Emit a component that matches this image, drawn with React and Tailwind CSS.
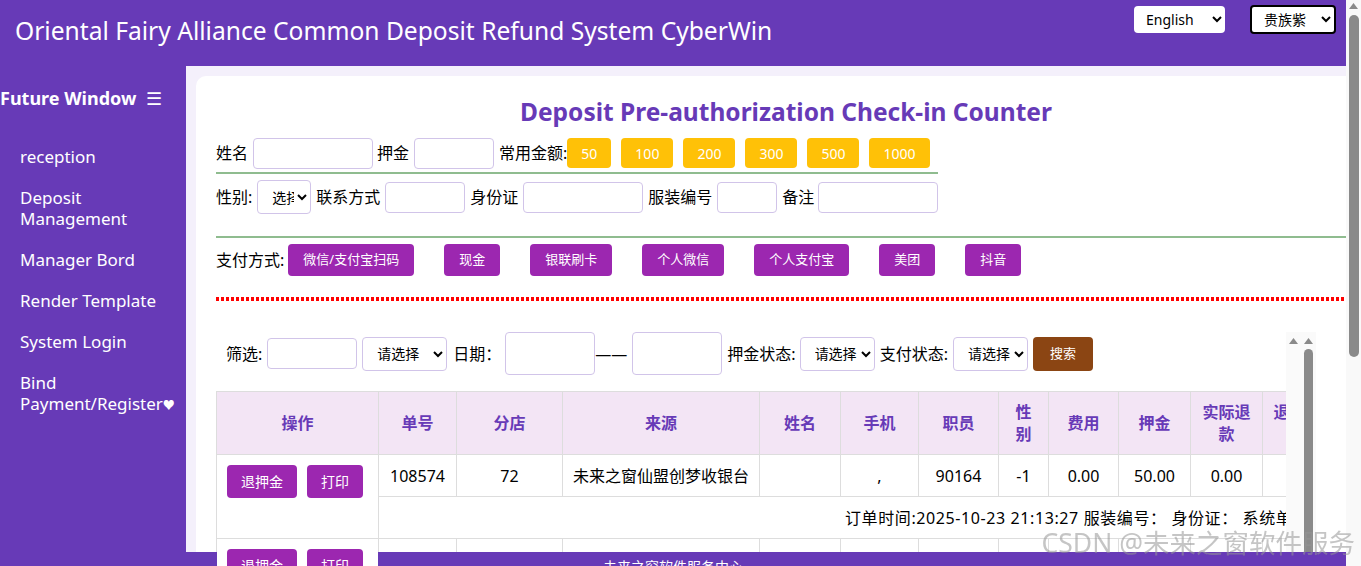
import React from 'react';

const menu = ['reception', 'Deposit Management', 'Manager Bord', 'Render Template', 'System Login'];
const amounts = ['50', '100', '200', '300', '500', '1000'];
const payMethods = ['微信/支付宝扫码', '现金', '银联刷卡', '个人微信', '个人支付宝', '美团', '抖音'];

const columns = [
    { label: '操作', w: 'w-[162px]' },
    { label: '单号', w: 'w-[78px]' },
    { label: '分店', w: 'w-[106px]' },
    { label: '来源', w: 'w-[197px]' },
    { label: '姓名', w: 'w-[81px]' },
    { label: '手机', w: 'w-[78px]' },
    { label: '职员', w: 'w-[80px]' },
    { label: '性别', w: 'w-[50px]' },
    { label: '费用', w: 'w-[70px]' },
    { label: '押金', w: 'w-[72px]' },
    { label: '实际退款', w: 'w-[72px]' },
    { label: '退款时间', w: 'w-[70px]' },
    { label: '押金状态', w: 'w-[90px]' },
    { label: '支付方式', w: 'w-[100px]' },
    { label: '支付状态', w: 'w-[90px]' },
];

const orders = [
    { id: '108574', shop: '72', src: '未来之窗仙盟创梦收银台', staff: '90164', time: '2025-10-23 21:13:27', deposit: '50.00' },
    { id: '108573', shop: '72', src: '未来之窗仙盟创梦收银台', staff: '90164', time: '2025-10-23 20:58:02', deposit: '100.00' },
    { id: '108572', shop: '72', src: '未来之窗仙盟创梦收银台', staff: '90164', time: '2025-10-23 20:41:15', deposit: '50.00' },
];

const inputCls = 'h-[31px] border border-[#d1c4e9] rounded-[4px] bg-white';
const selectCls = 'border border-[#d1c4e9] rounded-[4px] bg-white text-[14px] pl-[10px]';

// scrollbar arrow, drawn as a small triangle
const Arrow = () => (
    <svg width="9" height="6" viewBox="0 0 9 6" className="block">
        <path d="M4.5 0 L9 6 L0 6 Z" fill="#8a8a8a" />
    </svg>
);

export default function App() {
    return (
        <div className="min-h-screen pr-[15px] bg-[#f4f0fb] text-black font-['Noto_Sans','Noto_Sans_CJK_SC',sans-serif]">
            {/* Header */}
            <header className="h-[66px] bg-[#673ab7] flex items-start justify-between pl-[15px] pr-[10px]">
                <h1 className="mt-[14px] text-white text-[24.6px] leading-[34px] font-normal">
                    Oriental Fairy Alliance Common Deposit Refund System CyberWin
                </h1>
                <div className="flex items-center gap-[25px] pt-[5px]">
                    <select className="w-[91px] h-[27px] rounded-[4px] bg-white text-[14px] pl-[8px]">
                        <option>English</option>
                        <option>中文</option>
                    </select>
                    <select className="w-[86px] h-[29px] rounded-[4px] bg-white border-2 border-black text-[14px] pl-[8px]">
                        <option>贵族紫</option>
                        <option>商务蓝</option>
                    </select>
                </div>
            </header>

            <div className="flex">
                {/* Sidebar */}
                <aside className="w-[186px] shrink-0 bg-[#673ab7] text-white">
                    <div className="pt-[20px] flex items-center leading-[24px]">
                        <span className="text-[18px] font-bold">Future Window</span>
                        <span className="ml-[10px] text-[18px]">☰</span>
                    </div>
                    <ul className="mt-[26px]">
                        {menu.map((m) => (
                            <li key={m} className="px-[20px] py-[10px] text-[17px] leading-[21px]">{m}</li>
                        ))}
                        <li className="px-[20px] py-[10px] text-[17px] leading-[21px]">
                            Bind Payment/Register<span className="text-[12px]">♥</span>
                        </li>
                    </ul>
                </aside>

                {/* Main */}
                <main className="flex-1 overflow-hidden pt-[10px] pl-[10px]">
                    <div className="bg-white rounded-[10px] w-[1180px] px-[20px] pt-[20px] pb-[20px]">
                        <h2 className="text-center text-[#673ab7] text-[24.5px] font-bold leading-[32px]">
                            Deposit Pre-authorization Check-in Counter
                        </h2>

                        {/* Register form */}
                        <div className="w-fit mt-[10px] text-[16px]">
                            <div className="flex items-center h-[30px] box-content pb-[4px] border-b-2 border-[#8fbc8f]">
                                <span>姓名</span>
                                <input className={`${inputCls} ml-[5px] w-[120px]`} />
                                <span className="ml-[4px]">押金</span>
                                <input className={`${inputCls} ml-[5px] w-[80px]`} />
                                <span className="ml-[5px]">常用金额:</span>
                                <div className="flex gap-[10px]">
                                    {amounts.map((a) => (
                                        <button key={a} className="h-[30px] px-[14px] rounded-[4px] bg-[#ffc107] text-white text-[14px]">{a}</button>
                                    ))}
                                </div>
                            </div>
                            <div className="flex items-center h-[34px] mt-[6px]">
                                <span>性别:</span>
                                <select className={`${selectCls} ml-[5px] w-[54px] h-[34px]`}>
                                    <option>选择</option>
                                    <option>男</option>
                                    <option>女</option>
                                </select>
                                <span className="ml-[5px]">联系方式</span>
                                <input className={`${inputCls} ml-[5px] w-[80px]`} />
                                <span className="ml-[5px]">身份证</span>
                                <input className={`${inputCls} ml-[5px] w-[120px]`} />
                                <span className="ml-[5px]">服装编号</span>
                                <input className={`${inputCls} ml-[5px] w-[60px]`} />
                                <span className="ml-[5px]">备注</span>
                                <input className={`${inputCls} ml-[4px] w-[120px]`} />
                            </div>
                        </div>

                        <div className="mt-[22px] border-t-2 border-[#8fbc8f]" />

                        <div className="flex items-center h-[32px] mt-[6px] text-[16px]">
                            <span>支付方式:</span>
                            <div className="flex gap-[30px] ml-[4px]">
                                {payMethods.map((p) => (
                                    <button key={p} className="h-[32px] px-[15px] rounded-[4px] bg-[#9c27b0] text-white text-[13px]">{p}</button>
                                ))}
                            </div>
                        </div>

                        <div className="mt-[21px] h-[4px] bg-[repeating-linear-gradient(90deg,#ff0000_0_3px,transparent_3px_5px)]" />

                        {/* List with its scroll bars */}
                        <div className="mt-[31px] flex">
                            <div className="w-[1070px] overflow-hidden">
                                <div className="flex items-center h-[43px] pl-[10px] text-[16px] whitespace-nowrap">
                                    <span>筛选:</span>
                                    <input className={`${inputCls} ml-[5px] w-[90px]`} />
                                    <select className={`${selectCls} ml-[5px] w-[85px] h-[34px]`}>
                                        <option>请选择</option>
                                    </select>
                                    <span className="ml-[6px]">日期：</span>
                                    <input className="ml-[4px] w-[90px] h-[43px] border border-[#d1c4e9] rounded-[4px]" />
                                    <span>——</span>
                                    <input className="ml-[5px] w-[90px] h-[43px] border border-[#d1c4e9] rounded-[4px]" />
                                    <span className="ml-[5px]">押金状态:</span>
                                    <select className={`${selectCls} ml-[4px] w-[75px] h-[34px]`}>
                                        <option>请选择</option>
                                    </select>
                                    <span className="ml-[5px]">支付状态:</span>
                                    <select className={`${selectCls} ml-[5px] w-[75px] h-[34px]`}>
                                        <option>请选择</option>
                                    </select>
                                    <button className="ml-[5px] w-[60px] h-[34px] rounded-[4px] bg-[#8b4513] text-white text-[13px]">搜索</button>
                                </div>

                                <table className="mt-[16px] table-fixed border-collapse w-[1386px] text-[16px]">
                                    <colgroup>
                                        {columns.map((c) => <col key={c.label} className={c.w} />)}
                                    </colgroup>
                                    <thead>
                                        <tr className="h-[63px]">
                                            {columns.map((c, i) => (
                                                <th
                                                    key={c.label}
                                                    className={`border border-[#dddddd] bg-[#f3e5f5] text-[#673ab7] font-bold px-[10px] leading-[22px] ${i === 0 ? 'sticky left-0 z-20' : ''}`}
                                                >
                                                    {c.label}
                                                </th>
                                            ))}
                                        </tr>
                                    </thead>
                                    <tbody>
                                        {orders.map((o) => (
                                            <React.Fragment key={o.id}>
                                                <tr className="h-[42px] text-center">
                                                    <td rowSpan={2} className="sticky left-0 z-20 bg-white border border-[#dddddd] align-top pt-[10px] pl-[10px] text-left">
                                                        <div className="flex gap-[10px]">
                                                            <button className="h-[33px] px-[14px] rounded-[4px] bg-[#9c27b0] text-white text-[14px]">退押金</button>
                                                            <button className="h-[33px] px-[14px] rounded-[4px] bg-[#9c27b0] text-white text-[14px]">打印</button>
                                                        </div>
                                                    </td>
                                                    <td className="border border-[#dddddd]">{o.id}</td>
                                                    <td className="border border-[#dddddd]">{o.shop}</td>
                                                    <td className="border border-[#dddddd] whitespace-nowrap">{o.src}</td>
                                                    <td className="border border-[#dddddd]"></td>
                                                    <td className="border border-[#dddddd]">,</td>
                                                    <td className="border border-[#dddddd]">{o.staff}</td>
                                                    <td className="border border-[#dddddd]">-1</td>
                                                    <td className="border border-[#dddddd]">0.00</td>
                                                    <td className="border border-[#dddddd]">{o.deposit}</td>
                                                    <td className="border border-[#dddddd]">0.00</td>
                                                    <td className="border border-[#dddddd]"></td>
                                                    <td className="border border-[#dddddd]">未退</td>
                                                    <td className="border border-[#dddddd]">现金</td>
                                                    <td className="border border-[#dddddd]">已支付</td>
                                                </tr>
                                                <tr className="h-[42px]">
                                                    <td colSpan={14} className="border border-[#dddddd] pl-[466px] whitespace-nowrap tracking-[0.6px]">
                                                        订单时间:{o.time} 服装编号：&nbsp;身份证：&nbsp;系统单号：{o.id}0072
                                                    </td>
                                                </tr>
                                            </React.Fragment>
                                        ))}
                                    </tbody>
                                </table>
                            </div>

                            {/* inner scroll bars */}
                            <div className="w-[15px] bg-[#fafafa] pt-[6px] flex justify-center">
                                <Arrow />
                            </div>
                            <div className="w-[15px] bg-[#fafafa] pt-[6px] flex flex-col items-center">
                                <Arrow />
                                <div className="mt-[5px] w-[9px] h-[420px] rounded-full bg-[#8a8a8a]" />
                            </div>
                        </div>
                    </div>
                </main>
            </div>

            {/* Footer */}
            <footer className="fixed bottom-0 left-0 right-[15px] z-10 h-[14px] overflow-hidden bg-[#673ab7] text-white text-[14px] text-center pt-[5px] leading-[20px]">
                未来之窗软件服务中心
            </footer>

            {/* Page scroll bar */}
            <div className="fixed top-0 right-0 bottom-0 z-10 w-[15px] bg-[#f9f9f9] pt-[3px] flex flex-col items-center">
                <Arrow />
                <div className="mt-[6px] w-[10px] h-[342px] rounded-full bg-[#8a8a8a]" />
            </div>

            {/* Watermark */}
            <div className="fixed right-[6px] bottom-[8px] z-30 text-[26.5px] leading-[30px] text-[rgba(150,150,150,0.55)] pointer-events-none">
                CSDN @未来之窗软件服务
            </div>
        </div>
    );
}
